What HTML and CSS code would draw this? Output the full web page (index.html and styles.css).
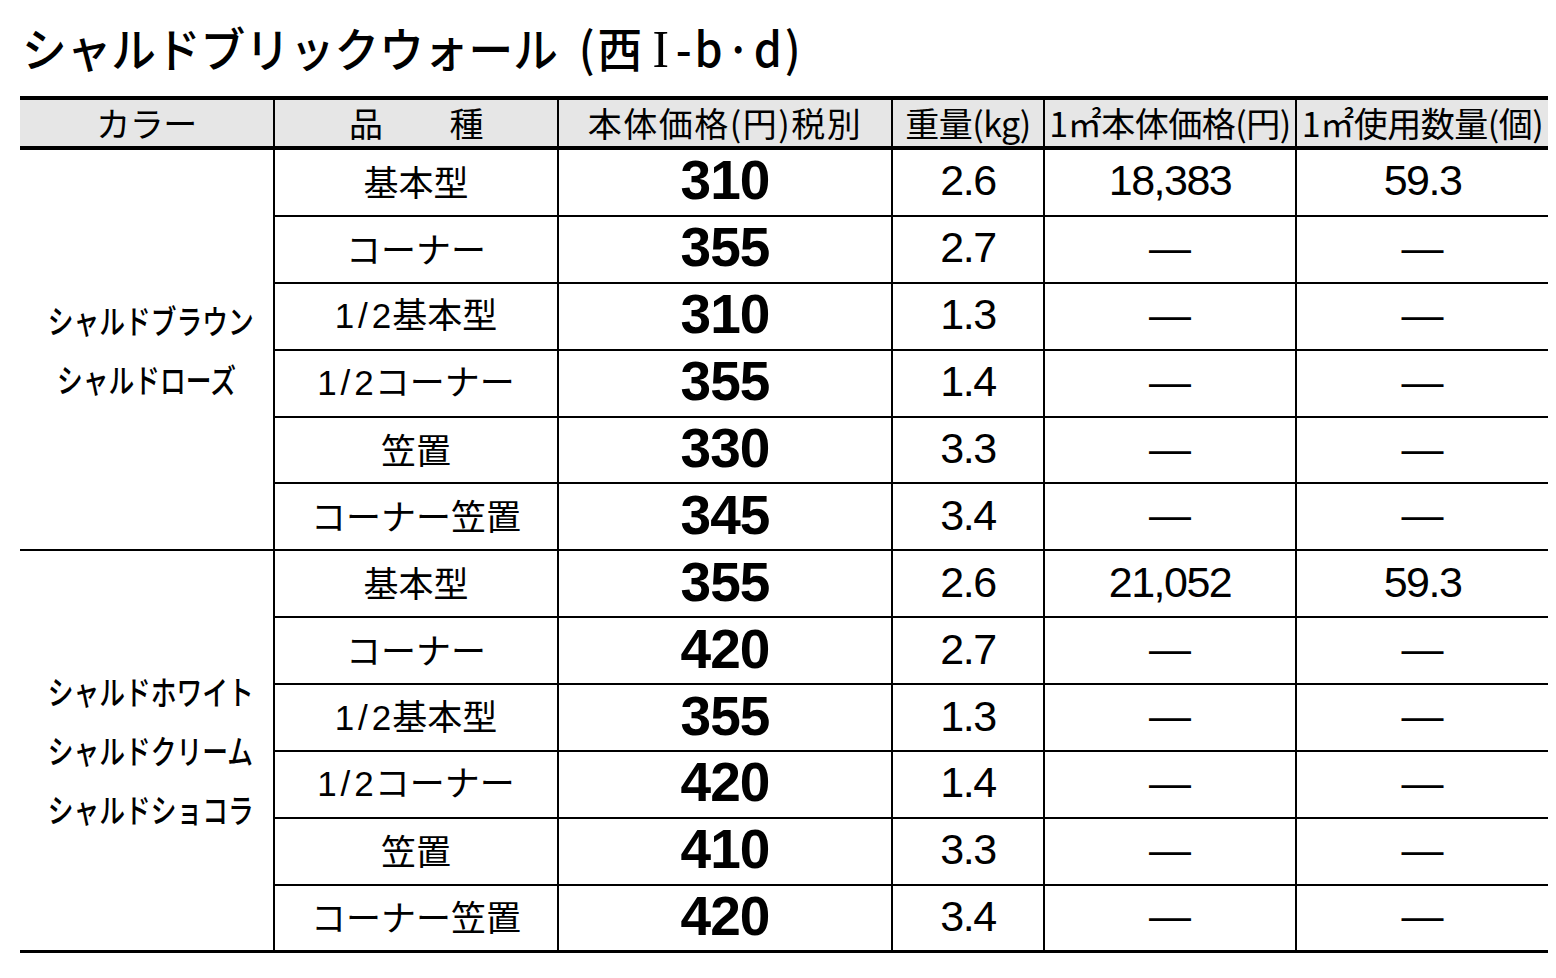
FILE: index.html
```html
<!DOCTYPE html>
<html lang="ja">
<head>
<meta charset="utf-8">
<title>シャルドブリックウォール</title>
<link rel="stylesheet" href="styles.css">
</head>
<body>
<h1 class="title"><span class="title-text">シャルドブリックウォール<span class="title-sub">(西<span class="roman">I</span>-b·d)</span></span></h1>
<table class="price">
  <colgroup>
    <col class="c-color"><col class="c-kind"><col class="c-price"><col class="c-weight"><col class="c-m2price"><col class="c-qty">
  </colgroup>
  <thead>
    <tr>
      <th>カラー</th>
      <th>品　　種</th>
      <th class="wide">本体価格(円)税別</th>
      <th>重量(kg)</th>
      <th>1㎡本体価格(円)</th>
      <th>1㎡使用数量(個)</th>
    </tr>
  </thead>
  <tbody>
    <tr>
      <td class="color group-end" rowspan="6"><span class="cname">シャルドブラウン</span><span class="cname">シャルドローズ</span></td>
      <td class="kind">基本型</td><td class="num">310</td><td class="val">2.6</td><td class="val">18,383</td><td class="val">59.3</td>
    </tr>
    <tr><td class="kind">コーナー</td><td class="num">355</td><td class="val">2.7</td><td class="val dash">—</td><td class="val dash">—</td></tr>
    <tr><td class="kind"><span class="frac">1/2</span>基本型</td><td class="num">310</td><td class="val">1.3</td><td class="val dash">—</td><td class="val dash">—</td></tr>
    <tr><td class="kind"><span class="frac">1/2</span>コーナー</td><td class="num">355</td><td class="val">1.4</td><td class="val dash">—</td><td class="val dash">—</td></tr>
    <tr><td class="kind">笠置</td><td class="num">330</td><td class="val">3.3</td><td class="val dash">—</td><td class="val dash">—</td></tr>
    <tr><td class="kind">コーナー笠置</td><td class="num">345</td><td class="val">3.4</td><td class="val dash">—</td><td class="val dash">—</td></tr>
    <tr>
      <td class="color last" rowspan="6"><span class="cname">シャルドホワイト</span><span class="cname">シャルドクリーム</span><span class="cname">シャルドショコラ</span></td>
      <td class="kind">基本型</td><td class="num">355</td><td class="val">2.6</td><td class="val">21,052</td><td class="val">59.3</td>
    </tr>
    <tr><td class="kind">コーナー</td><td class="num">420</td><td class="val">2.7</td><td class="val dash">—</td><td class="val dash">—</td></tr>
    <tr><td class="kind"><span class="frac">1/2</span>基本型</td><td class="num">355</td><td class="val">1.3</td><td class="val dash">—</td><td class="val dash">—</td></tr>
    <tr><td class="kind"><span class="frac">1/2</span>コーナー</td><td class="num">420</td><td class="val">1.4</td><td class="val dash">—</td><td class="val dash">—</td></tr>
    <tr><td class="kind">笠置</td><td class="num">410</td><td class="val">3.3</td><td class="val dash">—</td><td class="val dash">—</td></tr>
    <tr class="last-row"><td class="kind">コーナー笠置</td><td class="num">420</td><td class="val">3.4</td><td class="val dash">—</td><td class="val dash">—</td></tr>
  </tbody>
</table>
</body>
</html>
```

FILE: styles.css
```css
html, body {
  margin: 0;
  padding: 0;
  background: #fff;
  color: #000;
  font-family: "Noto Sans CJK JP", "Noto Sans", sans-serif;
}

.title {
  margin: 0;
  height: 96px;
  box-sizing: border-box;
  padding: 19px 0 0 22px;
  font-size: 47px;
  font-weight: 500;
  line-height: 56px;
  white-space: nowrap;
}

.title-text {
  display: inline-block;
  transform: scaleX(0.95);
  transform-origin: left center;
}

.title-sub {
  margin-left: 22px;
  letter-spacing: 3px;
}

.roman {
  font-family: "Liberation Serif", "DejaVu Serif", serif;
  font-weight: 400;
  font-size: 52px;
  margin: 0 4px 0 8px;
}

.price {
  margin-left: 20px;
  width: 1528px;
  table-layout: fixed;
  border-collapse: separate;
  border-spacing: 0;
}

.c-color { width: 253px; }
.c-kind { width: 284px; }
.c-price { width: 334px; }
.c-weight { width: 152px; }
.c-m2price { width: 252px; }
.c-qty { width: 253px; }

.price th,
.price td {
  padding: 0;
  text-align: center;
  vertical-align: middle;
  border-left: 2px solid #000;
  white-space: nowrap;
}

.price th:first-child,
.price td.color {
  border-left: none;
}

.price th {
  height: 46px;
  background: #e6e6e6;
  border-top: 4px solid #000;
  border-bottom: 4px solid #000;
  font-size: 34px;
  font-weight: 400;
  line-height: 44px;
  letter-spacing: -0.5px;
}

.price th.wide {
  letter-spacing: 1.5px;
}

.price tbody tr {
  height: 66.9px;
}

.price td {
  border-bottom: 2px solid #000;
  line-height: 1;
}

.price td.color.group-end {
  border-bottom: 2px solid #000;
}

.price td.color.last,
.price tr.last-row td {
  border-bottom: 3px solid #000;
}

.kind {
  font-size: 35px;
  padding-bottom: 4px !important;
}

.frac {
  font-family: "Liberation Sans", Arial, sans-serif;
  letter-spacing: 4px;
  margin-right: -3px;
}

.num {
  font-family: "Liberation Sans", Arial, sans-serif;
  font-weight: 700;
  font-size: 55px;
  letter-spacing: -1px;
  padding-bottom: 3px !important;
}

.val {
  font-family: "Liberation Sans", Arial, sans-serif;
  font-size: 43px;
  letter-spacing: -1.5px;
  padding-bottom: 3px !important;
}

.val.dash {
  font-size: 42px;
  letter-spacing: 0;
}

.color {
  line-height: 59px;
}

.cname {
  display: block;
  font-size: 33px;
  font-weight: 500;
  line-height: 59px;
  transform: scaleX(0.78);
}
```
